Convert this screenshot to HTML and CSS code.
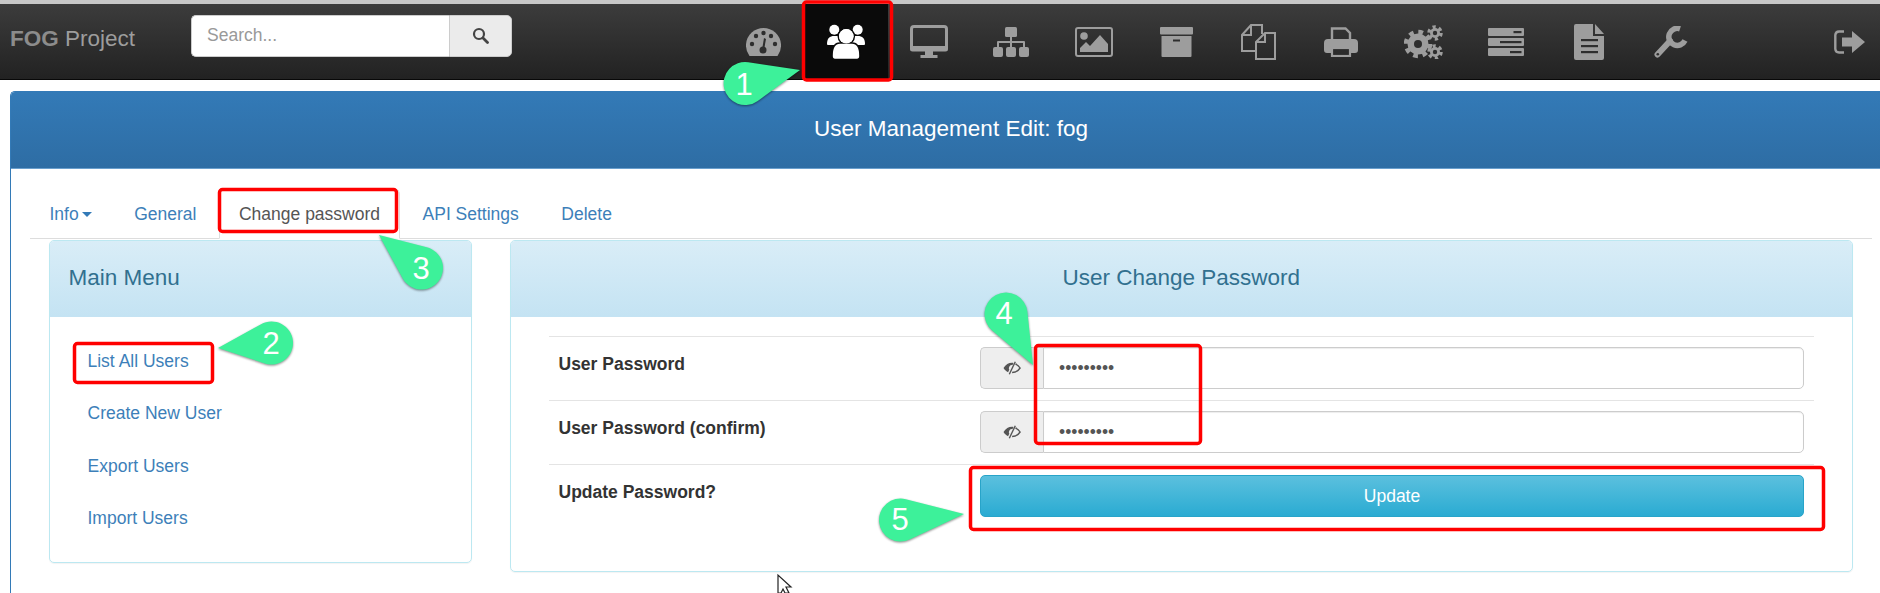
FILE: index.html
```html
<!DOCTYPE html>
<html lang="en">
<head>
    <meta charset="UTF-8">
    <meta name="viewport" content="width=device-width, initial-scale=1.0">
    <title>FOG Project - User Change Password</title>
    <link rel="stylesheet" href="styles.css">
</head>
<body>
    <div class="top-strip"></div>
    <nav class="navbar">
        <div class="brand"><b>FOG</b> Project</div>
        <form class="search">
            <input class="search-input" type="text" placeholder="Search...">
            <button class="search-btn" type="button">
                <svg width="17" height="17" viewBox="0 0 17 17"><circle cx="7" cy="7" r="5" fill="none" stroke="#444" stroke-width="2.200"/><path d="M11 11l4.500 4.500" stroke="#444" stroke-width="2.800" stroke-linecap="round"/></svg>
            </button>
        </form>
        <ul class="nav-icons">
            <li>
                <svg width="35" height="28" viewBox="0 0 35 28"><path class="ic" d="M3.5 28A17.5 17.5 0 1 1 31.500 28Z"/><g class="hole"><circle cx="6" cy="16" r="2.200"/><circle cx="10" cy="8" r="2.200"/><circle cx="17.500" cy="5" r="2.200"/><circle cx="25" cy="8" r="2.200"/><circle cx="29" cy="16" r="2.200"/><circle cx="17" cy="22" r="3.500"/><path d="M16 22l2-12 2 1-2 11z"/></g></svg>
            </li>
            <li class="active">
                <svg width="38" height="36" viewBox="0 0 38 36"><g class="ic-white"><circle cx="7.300" cy="5.700" r="5"/><circle cx="30.700" cy="5.700" r="5"/><path d="M0 20c0-6 3-8 7-8h24c4 0 7 2 7 8 0 1-1 1-2 1H2c-1 0-2 0-2-1z"/><g stroke="#0a0a0a" stroke-width="1.600"><circle cx="19.300" cy="12.300" r="8"/><path d="M5 32c0-9 3-13 8-13h12c5 0 8 4 8 13 0 2-1 3.500-3 3.500H8c-2 0-3-1.500-3-3.500z"/></g><circle cx="19.300" cy="12.300" r="7.300"/></g></svg>
            </li>
            <li>
                <svg width="38" height="33" viewBox="0 0 38 33"><rect class="ic-line" x="1.500" y="1.500" width="35" height="23" rx="2.500" stroke-width="3"/><path class="ic" d="M0 21h38v3a2.500 2.500 0 0 1-2.500 2.500h-33A2.500 2.500 0 0 1 0 24zM15 26h8v4h4.500v3h-17v-3H15z"/></svg>
            </li>
            <li>
                <svg width="36" height="30" viewBox="0 0 36 30"><g class="ic"><rect x="12" width="12" height="10" rx="1.500"/><rect x="17" y="10" width="2" height="10"/><path d="M4 20v-5a1 1 0 0 1 1-1h26a1 1 0 0 1 1 1v5h-2v-4H6v4z"/><rect y="20" width="10" height="10" rx="2"/><rect x="13" y="20" width="10" height="10" rx="2"/><rect x="26" y="20" width="10" height="10" rx="2"/></g></svg>
            </li>
            <li>
                <svg width="38" height="30" viewBox="0 0 38 30"><rect class="ic-line" x="1" y="1" width="36" height="28" rx="2" stroke-width="2"/><circle class="ic" cx="9" cy="9" r="3.800"/><path class="ic" d="M5 25v-4l6-6 4 4 10-11 8 9v8z"/></svg>
            </li>
            <li>
                <svg width="33" height="30" viewBox="0 0 33 30"><g class="ic"><rect width="33" height="7.500" rx="1"/><path d="M1.500 9h30v20a1 1 0 0 1-1 1h-28a1 1 0 0 1-1-1z"/></g><rect class="hole" x="13" y="12.500" width="7" height="2"/></svg>
            </li>
            <li>
                <svg width="35" height="36" viewBox="0 0 35 36"><g class="ic-line" stroke-width="2"><path d="M14 27H1V11L10 1h11v9"/><path d="M10 1v10H1"/><path d="M15 18l9-9h10v26H15z"/><path d="M24 9v9h-9"/></g></svg>
            </li>
            <li>
                <svg width="34" height="30" viewBox="0 0 34 30"><path class="ic-line" stroke-width="2.400" d="M8 14V1.500h13.500l4.500 4.500v8"/><path class="ic" d="M4 12h26a4 4 0 0 1 4 4v7a3 3 0 0 1-3 3h-4v-6H7v6H3a3 3 0 0 1-3-3v-7a4 4 0 0 1 4-4z"/><rect class="ic-line" x="8" y="21" width="18" height="8" stroke-width="2.200"/></svg>
            </li>
            <li>
                <svg width="39" height="34" viewBox="0 0 39 34"><g class="gear-big"><circle cx="14" cy="19" r="10.500"/><circle class="teeth" cx="14" cy="19" r="12" stroke-width="4.500" stroke-dasharray="4.700 4.720"/><circle class="hole" cx="14" cy="19" r="4"/></g><g class="gear-small"><circle cx="31" cy="8" r="5"/><circle class="teeth" cx="31" cy="8" r="6" stroke-width="3.500" stroke-dasharray="3.140 3.140"/><circle class="hole" cx="31" cy="8" r="2.200"/><circle cx="31" cy="27" r="5"/><circle class="teeth" cx="31" cy="27" r="6" stroke-width="3.500" stroke-dasharray="3.140 3.140"/><circle class="hole" cx="31" cy="27" r="2.200"/></g></svg>
            </li>
            <li>
                <svg width="36" height="28" viewBox="0 0 36 28"><g class="ic"><rect width="36" height="8" rx="1"/><rect y="10" width="36" height="8" rx="1"/><rect y="20" width="36" height="8" rx="1"/></g><g class="hole"><rect x="25.500" y="3" width="8" height="2.200"/><rect x="12" y="13" width="21.500" height="2.200"/><rect x="22" y="23" width="11.500" height="2.200"/></g></svg>
            </li>
            <li>
                <svg width="30" height="36" viewBox="0 0 30 36"><path class="ic" d="M2 0h17v12h11v22a2 2 0 0 1-2 2H2a2 2 0 0 1-2-2V2a2 2 0 0 1 2-2zM21 0l9 10h-9z"/><g class="hole"><rect x="7" y="15" width="17" height="2.200"/><rect x="7" y="21" width="17" height="2.200"/><rect x="7" y="27" width="17" height="2.200"/></g></svg>
            </li>
            <li>
                <svg width="34" height="32" viewBox="0 0 34 32"><path class="ic-line" stroke-width="6" stroke-linecap="round" d="M3.500 28.500L16 15"/><path class="ic-line" stroke-width="5.500" d="M31 14.500A8.500 8.500 0 1 1 26 2.800"/><path class="ic" d="M15 12l5 5-3 2-4-4z"/><circle class="hole" cx="3.800" cy="28.200" r="1.300"/></svg>
            </li>
        </ul>
        <a class="sign-out">
            <svg width="32" height="24" viewBox="0 0 32 24"><path class="ic-line" stroke-width="2.400" d="M10 1.500H5A3.800 3.800 0 0 0 1.300 5v14A3.800 3.800 0 0 0 5 22.500h5"/><path class="ic" d="M8 7.500h10V1l13 11-13 11v-6.500H8z"/></svg>
        </a>
    </nav>

    <div class="panel-main">
        <div class="panel-main-heading">User Management Edit: fog</div>
        <div class="panel-main-body">
            <ul class="tabs">
                <li><a>Info<span class="caret"></span></a></li>
                <li><a>General</a></li>
                <li class="active"><a>Change password</a></li>
                <li><a>API Settings</a></li>
                <li><a>Delete</a></li>
            </ul>
            <div class="columns">
                <div class="panel-info side-menu">
                    <div class="panel-heading">Main Menu</div>
                    <ul class="menu-list">
                        <li><a>List All Users</a></li>
                        <li><a>Create New User</a></li>
                        <li><a>Export Users</a></li>
                        <li><a>Import Users</a></li>
                    </ul>
                </div>
                <div class="panel-info form-panel">
                    <div class="panel-heading center">User Change Password</div>
                    <div class="form-body">
                        <div class="form-row">
                            <label class="form-label">User Password</label>
                            <div class="input-group">
                                <span class="addon">
                                    <svg width="18" height="14" viewBox="0 0 18 14"><path class="eye" d="M9 1.800C5.500 1.800 2.800 3.500 0.500 7c1.300 2 2.800 3.400 4.600 4.200l1.200-2.400A3.200 3.200 0 0 1 9.500 4l1-2.100C10 1.800 9.500 1.800 9 1.800z"/><path class="eye-line" d="M12.500 3c1.800 0.800 3.400 2.100 4.600 4-2 3-4.800 4.500-8 4.500"/><path class="eye-line" d="M12.300 0.700L6.300 13.300"/></svg>
                                </span>
                                <input class="form-input" type="password" value="password1">
                            </div>
                        </div>
                        <div class="form-row">
                            <label class="form-label">User Password (confirm)</label>
                            <div class="input-group">
                                <span class="addon">
                                    <svg width="18" height="14" viewBox="0 0 18 14"><path class="eye" d="M9 1.800C5.500 1.800 2.800 3.500 0.500 7c1.300 2 2.800 3.400 4.600 4.200l1.200-2.400A3.200 3.200 0 0 1 9.500 4l1-2.100C10 1.800 9.500 1.800 9 1.800z"/><path class="eye-line" d="M12.500 3c1.800 0.800 3.400 2.100 4.600 4-2 3-4.800 4.500-8 4.500"/><path class="eye-line" d="M12.300 0.700L6.300 13.300"/></svg>
                                </span>
                                <input class="form-input" type="password" value="password1">
                            </div>
                        </div>
                        <div class="form-row">
                            <label class="form-label">Update Password?</label>
                            <button class="btn-update" type="button">Update</button>
                        </div>
                    </div>
                </div>
            </div>
        </div>
    </div>

    <!-- annotations drawn over the screenshot -->
    <svg class="marks" width="1880" height="593" viewBox="0 0 1880 593">
        <g class="mark-box">
            <rect x="803.500" y="2" width="88" height="78" rx="3"/>
            <rect x="219.500" y="189.500" width="177" height="42" rx="3"/>
            <rect x="74.500" y="343.500" width="138" height="39" rx="3"/>
            <rect x="1035.500" y="345.500" width="165" height="98" rx="3"/>
            <rect x="970.500" y="467.500" width="853" height="62" rx="3"/>
        </g>
        <g class="mark-bubble">
            <path d="M800 70L748.200 62.200A21.500 21.500 0 1 0 757.700 100.900Z"/>
            <path d="M218 348L264.700 363.400A21.500 21.500 0 1 0 261.100 324.200Z"/>
            <path d="M379 235L426.800 247.200A21.500 21.500 0 1 1 402.600 278.300Z"/>
            <path d="M1033 365L1027.400 311.700A21.500 21.500 0 1 0 992.100 330.400Z"/>
            <path d="M964 514L905.800 499.200A21.500 21.500 0 1 0 909.600 539.500Z"/>
        </g>
        <g class="mark-num">
            <text x="744" y="95">1</text>
            <text x="271" y="354">2</text>
            <text x="421" y="279">3</text>
            <text x="1004" y="324">4</text>
            <text x="900" y="530">5</text>
        </g>
        <path class="cursor" d="M778 575v18h3l2-4 2 4h4l-3-6h5z"/>
    </svg>
</body>
</html>
```

FILE: styles.css
```css
* {
    box-sizing: border-box;
}
html, body {
    height: 100%;
    overflow: hidden;
}
body {
    margin: 0;
    font-family: "Liberation Sans", Arial, sans-serif;
    font-size: 17.5px;
    line-height: 25px;
    color: #333;
    background-color: #fff;
    position: relative;
}
ul {
    list-style: none;
    margin: 0;
    padding: 0;
}
a {
    color: #3d7fb9;
}

/* top bar */
.top-strip {
    height: 4px;
    background-color: #c8c8c8;
}
.navbar {
    height: 76px;
    display: flex;
    align-items: center;
    background: linear-gradient(to bottom, #3c3c3c, #222);
    border-bottom: 1px solid #080808;
    padding-left: 10px;
}
.brand {
    width: 181px;
    padding-bottom: 7px;
    font-size: 22.5px;
    color: #9d9d9d;
}
.brand b {
    color: #8c8c8c;
}
.search {
    display: flex;
    width: 321px;
    height: 42px;
    margin-top: -12px;
}
.search-input {
    flex: 1;
    min-width: 0;
    border: 1px solid #ccc;
    border-right: 0;
    border-radius: 5px 0 0 5px;
    padding: 0 15px;
    font: inherit;
    background-color: #fff;
}
.search-input::placeholder {
    color: #999;
}
.search-btn {
    width: 63px;
    border: 1px solid #ccc;
    border-radius: 0 5px 5px 0;
    background-color: #ebebeb;
    display: flex;
    align-items: center;
    justify-content: center;
    padding: 0;
}
.nav-icons {
    display: flex;
    align-self: stretch;
    margin-left: 210.500px;
}
.nav-icons li {
    width: 82.500px;
    display: flex;
    align-items: center;
    justify-content: center;
}
.nav-icons li.active {
    background-color: #0a0a0a;
}
.sign-out {
    margin-left: auto;
    padding-right: 14px;
    display: flex;
}
svg {
    display: block;
}
.ic, .gear-big, .gear-small {
    fill: #9d9d9d;
}
.ic-white {
    fill: #fff;
}
.ic-line {
    fill: none;
    stroke: #9d9d9d;
}
.teeth {
    fill: none;
    stroke: #9d9d9d;
}
.hole {
    fill: #2e2e2e;
}

/* main panel */
.panel-main {
    margin: 11px 0 0 10px;
    height: 520px;
    border-left: 1.500px solid #337ab7;
    border-top: 1px solid #337ab7;
    border-radius: 5px 0 0 0;
}
.panel-main-heading {
    height: 77px;
    display: flex;
    align-items: center;
    justify-content: center;
    padding: 0 0 4px 11px;
    background: linear-gradient(to bottom, #337ab7, #2e6da4);
    border-bottom: 1px solid #6a9fcd;
    color: #fff;
    font-size: 22.500px;
    border-radius: 4px 0 0 0;
}
.panel-main-body {
    padding: 20px 8px 0 18.500px;
}
.tabs {
    display: flex;
    height: 50px;
    border-bottom: 1.500px solid #ddd;
}
.tabs li {
    margin-right: 2.500px;
    height: 50px;
}
.tabs a {
    display: block;
    padding: 12.500px 20px;
}
.tabs li.active {
    background-color: #fff;
    border: 1px solid #ddd;
    border-bottom-color: #fff;
    border-radius: 5px 5px 0 0;
}
.tabs li.active a {
    padding: 11.500px 19px;
    color: #555;
}
.caret {
    display: inline-block;
    margin-left: 3px;
    vertical-align: middle;
    border-top: 5px solid #337ab7;
    border-left: 5px solid transparent;
    border-right: 5px solid transparent;
}

.columns {
    display: flex;
    align-items: flex-start;
    gap: 38px;
    padding: 1px 19px 0 19px;
}
.panel-info {
    border: 1.250px solid #bce8f1;
    border-radius: 5px;
    box-shadow: 0 1px 1px rgba(0, 0, 0, 0.05);
}
.panel-heading {
    height: 76px;
    padding: 24px 19px 0;
    font-size: 22.500px;
    color: #31708f;
    background: linear-gradient(to bottom, #d9edf7, #c4e3f3);
    border-radius: 4px 4px 0 0;
}
.panel-heading.center {
    text-align: center;
}
.side-menu {
    width: 423px;
    height: 323px;
}
.menu-list {
    padding: 18px 0 18px 38px;
}
.menu-list li {
    height: 52.500px;
    display: flex;
    align-items: center;
}
.form-panel {
    flex: 1;
    height: 332px;
}
.form-body {
    padding: 18.500px 38px 0;
}
.form-row {
    display: flex;
    height: 64px;
    border-top: 1.500px solid #e4e4e4;
    padding: 10.500px 10px 0;
}
.form-label {
    width: 421.500px;
    padding-top: 5px;
    font-weight: bold;
}
.input-group {
    flex: 1;
    display: flex;
    height: 42px;
}
.addon {
    width: 63px;
    display: flex;
    align-items: center;
    justify-content: center;
    background-color: #eee;
    border: 1.250px solid #ccc;
    border-right: 0;
    border-radius: 5px 0 0 5px;
}
.eye {
    fill: #555;
}
.eye-line {
    fill: none;
    stroke: #555;
    stroke-width: 1.400px;
}
.form-input {
    flex: 1;
    min-width: 0;
    padding: 0 15px;
    font-family: inherit;
    font-size: 17.500px;
    color: #555;
    background-color: #fff;
    border: 1.250px solid #ccc;
    border-radius: 0 5px 5px 0;
    box-shadow: inset 0 1px 1px rgba(0, 0, 0, 0.075);
}
.btn-update {
    flex: 1;
    height: 42px;
    font: inherit;
    color: #fff;
    background: linear-gradient(to bottom, #5bc0de, #2aabd2);
    border: 1.250px solid #28a4c9;
    border-radius: 5px;
}

/* annotations */
.marks {
    position: absolute;
    left: 0;
    top: 0;
    pointer-events: none;
}
.mark-box rect {
    fill: none;
    stroke: #f00;
    stroke-width: 3.500px;
}
.mark-bubble path {
    fill: #3df19a;
    filter: drop-shadow(0 1px 1px rgba(0, 0, 0, 0.45));
}
.mark-num text {
    font-family: "Liberation Sans", Arial, sans-serif;
    font-size: 31px;
    fill: #fff;
    text-anchor: middle;
}
.cursor {
    fill: #fff;
    stroke: #222;
    stroke-width: 1.200px;
}
```
